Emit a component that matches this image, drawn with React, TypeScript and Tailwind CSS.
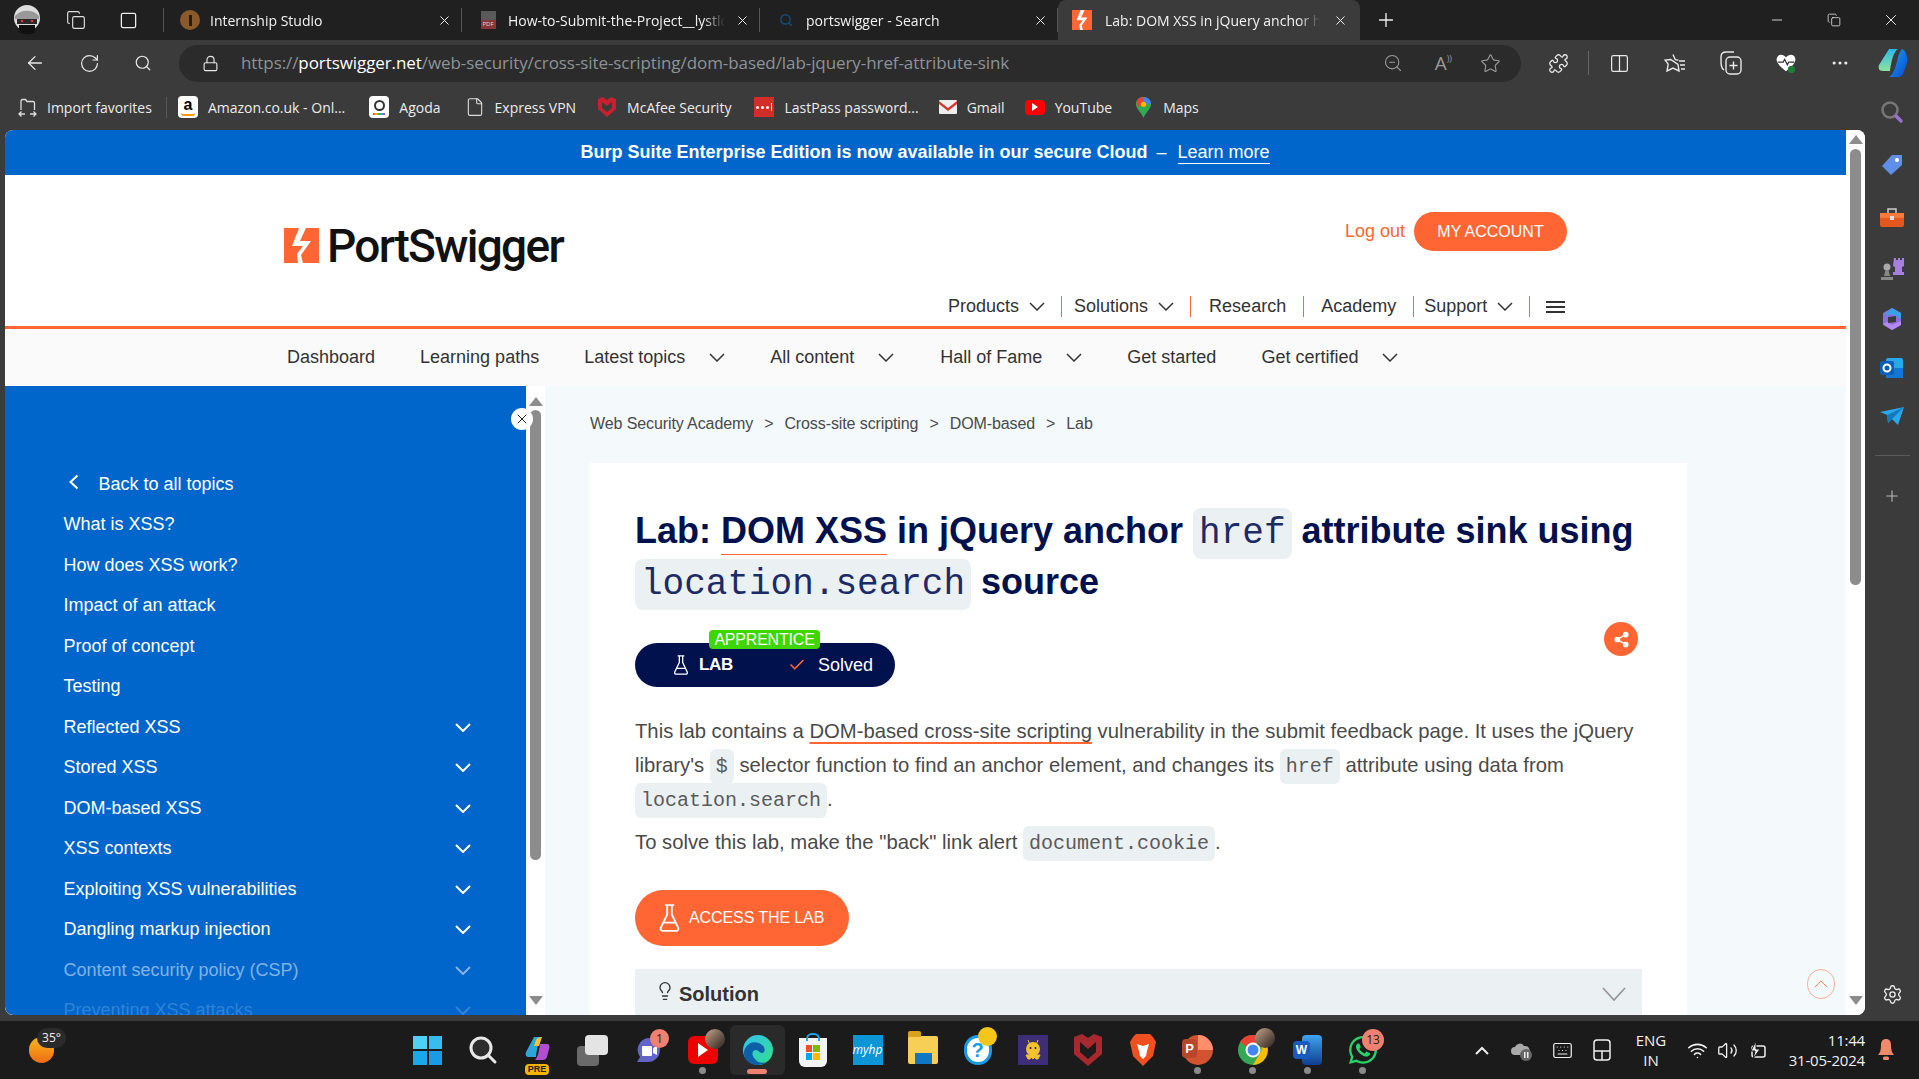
import { ArrowLeft, RotateCw, Search, Lock, ZoomOut, Star, Puzzle, Columns2, Ellipsis, X, Plus, Minus, Check, Share2, Lightbulb, Settings, Wifi, Volume2, Keyboard, Copy, Square, File } from 'lucide-react';
import { FaWhatsapp } from 'react-icons/fa';
import type { ReactNode } from 'react';

const sans = 'font-["Liberation_Sans",Arial,sans-serif]';
const ui = 'font-["Open_Sans",sans-serif]';

function Bolt({ size = 35 }: { size?: number }) {
  return (
    <svg width={size} height={size} viewBox="0 0 35 35">
      <rect width="35" height="35" fill="#ff6633" />
      <path d="M14 0h7l-6 13h11L16 27l2 8h-5l-1-9 6-8H7l7-18z" fill="#fff" transform="translate(1 0)" />
    </svg>
  );
}

// plain V chevron, lucide's is too narrow for this page
function Vee({ w = 16, h = 9, stroke = 1.5, className = '' }: { w?: number; h?: number; stroke?: number; className?: string }) {
  return (
    <svg width={w} height={h} viewBox={`0 0 ${w} ${h}`} className={className}>
      <path d={`M1 1L${w / 2} ${h - 1}L${w - 1} 1`} fill="none" stroke="currentColor" strokeWidth={stroke} />
    </svg>
  );
}

function Flask({ w, h, stroke = 1.6 }: { w: number; h: number; stroke?: number }) {
  return (
    <svg width={w} height={h} viewBox="0 0 18 24">
      <path d="M5 1h8M7 1v8L1.500 20.500C1 22 2 23 3 23h12c1 0 2-1 1.500-2.500L11 9V1M4 16h10" fill="none" stroke="currentColor" strokeWidth={stroke} strokeLinejoin="round" />
    </svg>
  );
}

function Tab({ icon, title, active }: { icon: ReactNode; title: string; active?: boolean }) {
  return (
    <div className={active ? 'w-[302px] h-full flex items-center pl-[14px] pr-[12px] gap-[13px] bg-[#3b3b3b] rounded-t-lg' : 'w-[298px] h-full flex items-center pl-[16px] pr-[9px] gap-[10px] border-r border-[#555]'}>
      <span className="w-[20px] h-[20px] flex items-center justify-center shrink-0">{icon}</span>
      <span className="flex-1 overflow-hidden whitespace-nowrap text-[14px] text-[#f2f2f2] [mask-image:linear-gradient(90deg,#000_90%,transparent)]">{title}</span>
      <X size={15} strokeWidth={1.6} className="text-[#eee] shrink-0" />
    </div>
  );
}

function Fav({ icon, label, className, gap = 'gap-[10px]' }: { icon: ReactNode; label: string; className: string; gap?: string }) {
  return (
    <div className={`flex items-center ${gap} ${className}`}>
      <span className="flex items-center justify-center">{icon}</span>
      <span className="text-[14px] text-[#ececec] whitespace-nowrap">{label}</span>
    </div>
  );
}

function Tri({ down }: { down?: boolean }) {
  return (
    <svg width="14" height="9" viewBox="0 0 14 9" className={down ? 'rotate-180' : ''}>
      <path d="M7 0l7 9H0z" fill="#8c8c8c" />
    </svg>
  );
}

function NavItem({ label, chevron, className }: { label: string; chevron?: boolean; className: string }) {
  return (
    <div className={`flex items-center h-[21px] text-[18px] text-[#333] border-[#ff6633] ${className}`}>
      <span>{label}</span>
      {chevron && <Vee className="ml-[10px]" />}
    </div>
  );
}

function SubItem({ label, chevron, className = '' }: { label: string; chevron?: boolean; className?: string }) {
  return (
    <div className={`flex items-center text-[18px] text-[#333] ${className}`}>
      <span>{label}</span>
      {chevron && <Vee className="ml-[24px]" />}
    </div>
  );
}

const sideRows = [
  { label: 'What is XSS?' },
  { label: 'How does XSS work?' },
  { label: 'Impact of an attack' },
  { label: 'Proof of concept' },
  { label: 'Testing' },
  { label: 'Reflected XSS', more: true },
  { label: 'Stored XSS', more: true },
  { label: 'DOM-based XSS', more: true },
  { label: 'XSS contexts', more: true },
  { label: 'Exploiting XSS vulnerabilities', more: true },
  { label: 'Dangling markup injection', more: true },
  { label: 'Content security policy (CSP)', more: true, tone: 'text-white/50' },
  { label: 'Preventing XSS attacks', more: true, tone: 'text-white/20' },
];

function Code({ children }: { children: ReactNode }) {
  return <code className='font-["Liberation_Mono",monospace] bg-[#ebf0f2] rounded-md px-[6px] py-[6px] text-[20px] leading-[20px] text-[#5a5a5a]'>{children}</code>;
}

function TitleCode({ children }: { children: ReactNode }) {
  return <code className='font-["Liberation_Mono",monospace] font-normal bg-[#ebf0f2] rounded-lg px-[6px] py-[5px] text-[36px] leading-[30px] text-[#1c2b66]'>{children}</code>;
}

function Task({ children, dot, active }: { children: ReactNode; dot?: boolean; active?: boolean }) {
  return (
    <div className={active ? 'relative w-[55px] h-[50px] flex items-center justify-center bg-[#2a2a2a] rounded-md' : 'relative w-[55px] h-[50px] flex items-center justify-center'}>
      {children}
      {dot && <span className="absolute bottom-[1px] left-[24px] w-[7px] h-[7px] rounded-full bg-[#8a8a8a]" />}
      {active && <span className="absolute bottom-[1px] left-[17px] w-[20px] h-[5px] rounded-full bg-[#f08070]" />}
    </div>
  );
}

function Badge({ n, className }: { n: string; className: string }) {
  return <span className={`absolute rounded-full bg-[#f08070] text-[#222] text-[12px] flex items-center justify-center ${className}`}>{n}</span>;
}

function Avatar({ className }: { className: string }) {
  return <span className={`absolute w-[20px] h-[20px] rounded-full bg-gradient-to-br from-[#c9a98a] to-[#2c2320] ${className}`} />;
}

export default function App() {
  return (
    <div className={`w-[1919px] h-[1079px] overflow-hidden flex flex-col bg-[#3b3b3b] ${ui}`}>
      {/* tab strip */}
      <div className="h-[40px] bg-[#202020] flex items-center shrink-0">
        <div className="w-[164px] h-[24px] flex items-center border-r border-[#555] shrink-0">
          <svg width="32" height="32" viewBox="0 0 32 32" className="ml-[11px]">
            <circle cx="16" cy="14" r="13" fill="#ddd" />
            <path d="M4 12c6-7 18-7 24 0v3H4z" fill="#999" />
            <rect x="6" y="15" width="20" height="5" fill="#2a2a2a" />
            <circle cx="11" cy="17" r="1.3" fill="#d33" />
            <circle cx="21" cy="17" r="1.3" fill="#d33" />
            <path d="M8 21h16v7c-4 3-12 3-16 0z" fill="#111" />
          </svg>
          <Copy size={20} strokeWidth={1.4} className="ml-[23px] text-[#ddd]" />
          <Square size={19} strokeWidth={1.6} className="ml-[33px] text-[#eee]" />
        </div>
        <div className="flex h-[40px] items-center">
          <div className="h-[24px] flex"><Tab title="Internship Studio" icon={<span className="w-[20px] h-[20px] rounded-full bg-[#8a5a2b] flex items-center justify-center"><span className="w-[3px] h-[11px] bg-[#2a1a0a]" /></span>} /></div>
          <div className="h-[24px] flex"><Tab title="How-to-Submit-the-Project__lystloc" icon={<span className="w-[15px] h-[18px] bg-[#5a5a5a] flex items-end"><span className="w-full h-[9px] bg-[#8b3535] text-[6px] leading-[9px] text-center text-[#ddd]">PDF</span></span>} /></div>
          <div className="h-[24px] flex"><Tab title="portswigger - Search" icon={<Search size={14} strokeWidth={2.5} className="text-[#174a78]" />} /></div>
          <Tab active title="Lab: DOM XSS in jQuery anchor href" icon={<span className="flex"><Bolt size={20} /></span>} />
        </div>
        <Plus size={22} strokeWidth={1.5} className="ml-[15px] text-[#eee]" />
        <div className="ml-auto flex items-center text-[#eee]">
          <Minus size={16} strokeWidth={1.3} />
          <Copy size={14} strokeWidth={1.3} className="ml-[42px]" />
          <X size={18} strokeWidth={1.3} className="ml-[41px] mr-[19px]" />
        </div>
      </div>

      {/* toolbar */}
      <div className="h-[46px] flex items-center shrink-0 text-[#e8e8e8] bg-[#3b3b3b]">
        <ArrowLeft size={22} strokeWidth={1.4} className="ml-[24px]" />
        <RotateCw size={21} strokeWidth={1.4} className="ml-[33px]" />
        <Search size={18} strokeWidth={1.6} className="ml-[34px]" />
        <div className="ml-[27px] w-[1342px] h-[37px] rounded-full bg-[#2b2b2b] flex items-center">
          <Lock size={17} strokeWidth={1.6} className="ml-[23px]" />
          <span className="ml-[22px] text-[17px] tracking-[-0.08px] text-[#8d9399] whitespace-nowrap">https://<span className="text-white">portswigger.net</span>/web-security/cross-site-scripting/dom-based/lab-jquery-href-attribute-sink</span>
          <div className="ml-auto flex items-center text-[#9a9a9a]">
            <ZoomOut size={20} strokeWidth={1.3} />
            <span className="ml-[32px] text-[19px] leading-none">A<span className="text-[9px] align-top">))</span></span>
            <Star size={21} strokeWidth={1.3} className="ml-[28px] mr-[20px]" />
          </div>
        </div>
        <Puzzle size={21} strokeWidth={1.5} className="ml-[27px]" />
        <span className="ml-[19px] w-px h-[24px] bg-[#666]" />
        <Columns2 size={21} strokeWidth={1.4} className="ml-[20px]" />
        <svg width="22" height="20" viewBox="0 0 22 20" className="ml-[34px]" fill="none" stroke="currentColor" strokeWidth="1.4">
          <path d="M9 1.500l2.300 5.200 3.200.4M14 11.500l1 6.500L9 15l-6 3 1.200-6.800L1 7l5.700-.5z" />
          <path d="M15 8h6M16 12h5M17 16h4" />
        </svg>
        <svg width="22" height="24" viewBox="0 0 22 24" className="ml-[34px]" fill="none" stroke="currentColor" strokeWidth="1.4">
          <path d="M4 19C1 17 1 14 1 6c0-3 2-5 5-5h8" />
          <rect x="6" y="6" width="15" height="17" rx="4" />
          <path d="M13.500 10.500v8M9.500 14.500h8" />
        </svg>
        <svg width="22" height="22" viewBox="0 0 24 24" className="ml-[33px]">
          <path d="M12 21C3 14 1 10 2 6.500 3.500 2 9 2 12 6c3-4 8.500-4 10 .5 1 3.500-1 7.500-10 14.500z" fill="#fff" />
          <path d="M3 11h6l1.500-3 3 6 1.500-3h6" fill="none" stroke="#333" strokeWidth="1.300" />
          <circle cx="18" cy="19" r="4" fill="#1e7d32" />
        </svg>
        <Ellipsis size={20} strokeWidth={1.8} className="ml-[33px]" />
        <svg width="32" height="32" viewBox="0 0 32 32" className="ml-[27px]">
          <defs>
            <linearGradient id="cpa" x1="0" y1="0" x2="0" y2="1"><stop offset="0" stopColor="#2ab7e8" /><stop offset="1" stopColor="#8fe3a0" /></linearGradient>
            <linearGradient id="cpb" x1="0" y1="0" x2="1" y2="1"><stop offset="0" stopColor="#19a3f5" /><stop offset="1" stopColor="#0a4bd0" /></linearGradient>
          </defs>
          <path d="M12 2h9c-4 2-7 12-8 22H6c-4 0-5-3-4-6z" fill="url(#cpa)" />
          <path d="M30 10c1 3 0 7-3 14-1 4-3 6-7 6h-8c4-2 7-10 9-20 1-3 2-6 4-8 3 1 4 4 5 8z" fill="url(#cpb)" />
        </svg>
      </div>

      <div className="flex flex-1 min-h-0">
        <div className="flex-1 min-w-0 flex flex-col">
          {/* favorites bar */}
          <div className="h-[44px] flex items-center shrink-0 pb-[2px]">
            <Fav className="ml-[18px] pr-[14px] border-r border-[#555]" icon={<svg width="19" height="19" viewBox="0 0 19 19" fill="none" stroke="#ddd" strokeWidth="1.300"><path d="M3 12V3c0-1 .5-1.500 1.500-1.500h3l1.500 2h6c1 0 1.500.5 1.500 1.500v7M1 16h6M3.500 13.500L1 16l2.500 2.500M18 16h-6M15.500 13.500L18 16l-2.500 2.500" /></svg>} label="Import favorites" />
            <Fav className="ml-[11px]" icon={<span className={`relative w-[20px] h-[22px] bg-white rounded-sm text-black text-[16px] leading-[18px] font-bold text-center ${sans}`}>a<span className="absolute left-[3px] bottom-[2px] w-[14px] h-[3px] border-b-2 border-[#f90] rounded-b-full" /></span>} label="Amazon.co.uk - Onl..." />
            <Fav className="ml-[24px]" icon={<span className="w-[20px] h-[22px] bg-white rounded-sm flex flex-col items-center justify-center gap-[2px]"><span className="w-[11px] h-[11px] rounded-full border-2 border-[#333]" /><span className="w-[12px] h-[2px] bg-[linear-gradient(90deg,#e33,#fb0,#3b5,#39e,#a4d)]" /></span>} label="Agoda" />
            <Fav className="ml-[24px]" icon={<File size={20} strokeWidth={1.3} className="text-[#ddd]" />} label="Express VPN" />
            <Fav className="ml-[22px]" gap="gap-[11px]" icon={<svg width="18" height="20" viewBox="0 0 18 20"><path d="M0 2l5-2 4 3 4-3 5 2v10l-9 8-9-8zM4 5v6l5 4 5-4V5l-5 4z" fill="#c8202f" fillRule="evenodd" /></svg>} label="McAfee Security" />
            <Fav className="ml-[23px]" icon={<span className="w-[20px] h-[20px] bg-[#d32d27] flex items-center justify-center gap-[2px]"><span className="w-[3px] h-[3px] rounded-full bg-white" /><span className="w-[3px] h-[3px] rounded-full bg-white" /><span className="w-[3px] h-[3px] rounded-full bg-white" /><span className="w-px h-[8px] bg-white" /></span>} label="LastPass password..." />
            <Fav className="ml-[20px]" icon={<svg width="18" height="14" viewBox="0 0 18 14"><rect width="18" height="14" rx="1" fill="#eee" /><path d="M0 1l9 7 9-7v3l-9 7-9-7z" fill="#d8382c" /></svg>} label="Gmail" />
            <Fav className="ml-[20px]" icon={<span className="w-[20px] h-[15px] rounded-[4px] bg-[#f00] flex items-center justify-center"><span className="w-0 h-0 border-y-[4px] border-y-transparent border-l-[6px] border-l-white" /></span>} label="YouTube" />
            <Fav className="ml-[24px]" gap="gap-[12px]" icon={<svg width="15" height="21" viewBox="0 0 15 21"><path d="M7.500 0C3 0 0 3.300 0 7.300 0 12 5 15 7.500 21 10 15 15 12 15 7.300 15 3.300 12 0 7.500 0z" fill="#34a853" /><path d="M1 3.500C2.500 1 5 0 7.500 0L7.500 7 2 10C.5 8 .3 5.500 1 3.500z" fill="#ea4335" /><path d="M7.500 0C11 0 15 3 15 7.300L7.500 7.300z" fill="#4285f4" /><circle cx="7.500" cy="7.300" r="2.600" fill="#fbbc04" /></svg>} label="Maps" />
          </div>

          {/* page */}
          <div className={`flex-1 min-h-0 ml-[5px] flex bg-white rounded-t-lg rounded-b-lg overflow-hidden ${sans}`}>
            <div className="flex-1 min-w-0 flex flex-col">
              <div className="h-[45px] shrink-0 bg-[#0066cc] flex items-center justify-center text-white text-[18px] pr-[1px]">
                <span className="font-bold">Burp Suite Enterprise Edition is now available in our secure Cloud</span>
                <span className="ml-[9px]">–</span>
                <span className="ml-[11px] border-b border-white leading-[22px]">Learn more</span>
              </div>

              <header className="h-[151px] shrink-0 flex flex-col pl-[279px]">
                <div className="flex">
                  <div className="flex items-center mt-[53px] h-[35px]">
                    <Bolt />
                    <span className='ml-[8px] font-["Roboto",sans-serif] font-medium text-[46px] tracking-[-1.7px] text-[#111] leading-none'>PortSwigger</span>
                  </div>
                </div>
                <div className="flex justify-end mt-[-51px] pr-[279px] h-[39px] items-center">
                  <span className="text-[18px] text-[#ff6633]">Log out</span>
                  <span className="ml-[9px] w-[153px] h-[39px] rounded-full bg-[#ff6633] text-white text-[16px] flex items-center justify-center">MY ACCOUNT</span>
                </div>
                <div className="flex mt-[45px] ml-[664px]">
                  <NavItem label="Products" chevron className="pr-[16px] border-r" />
                  <NavItem label="Solutions" chevron className="pl-[12px] pr-[16px] border-r" />
                  <NavItem label="Research" className="pl-[18px] pr-[17px] border-r" />
                  <NavItem label="Academy" className="pl-[17px] pr-[17px] border-r" />
                  <NavItem label="Support" chevron className="pl-[10px] pr-[16px] border-r" />
                  <div className="ml-[16px] w-[19px] h-[21px] flex flex-col justify-center gap-[3px]">
                    <span className="h-[2px] bg-[#333]" /><span className="h-[2px] bg-[#333]" /><span className="h-[2px] bg-[#333]" />
                  </div>
                </div>
              </header>

              <div className="h-[3px] shrink-0 bg-[#ff6633]" />

              <nav className="h-[57px] shrink-0 bg-[#fafafa] flex items-center pl-[282px]">
                <SubItem label="Dashboard" />
                <SubItem label="Learning paths" className="ml-[45px]" />
                <SubItem label="Latest topics" chevron className="ml-[45px]" />
                <SubItem label="All content" chevron className="ml-[45px]" />
                <SubItem label="Hall of Fame" chevron className="ml-[46px]" />
                <SubItem label="Get started" className="ml-[45px]" />
                <SubItem label="Get certified" chevron className="ml-[45px]" />
              </nav>

              <div className="flex-1 min-h-0 flex">
                {/* left topic menu */}
                <aside className="relative w-[521px] shrink-0 bg-[#0066cc] text-white text-[18px] rounded-bl-lg overflow-hidden pl-[58.500px] pr-[55px] pt-[78px]">
                  <div className="h-[40.500px] flex items-center">
                    <svg width="11" height="16" viewBox="0 0 11 16" className="ml-[4px] -mt-[5px]"><path d="M9.500 1.500L2.500 8l7 6.500" fill="none" stroke="#fff" strokeWidth="2" /></svg>
                    <span className="ml-[20px]">Back to all topics</span>
                  </div>
                  {sideRows.map(row => (
                    <div key={row.label} className={`h-[40.500px] flex items-center justify-between ${row.tone || ''}`}>
                      <span>{row.label}</span>
                      {row.more && <Vee stroke={2} />}
                    </div>
                  ))}
                </aside>
                <div className="relative w-[19px] shrink-0 bg-white flex flex-col items-center">
                  <span className="mt-[11px] flex"><Tri /></span>
                  <span className="mt-[4px] w-[11px] h-[450px] rounded-full bg-[#8c8c8c]" />
                  <span className="mt-auto mb-[10px] flex"><Tri down /></span>
                  <span className="absolute left-[-15px] top-[22px] w-[22px] h-[22px] rounded-full bg-white flex items-center justify-center"><X size={16} strokeWidth={1.5} className="text-[#222]" /></span>
                </div>

                {/* content */}
                <main className="relative flex-1 min-w-0 bg-[#f4f9fb] pl-[45px] pr-[159px]">
                  <div className="h-[77px] flex items-center pb-[1px] text-[16px] text-[#4a4a4a] tracking-[-0.1px]">
                    <span>Web Security Academy</span>
                    <span className="mx-[11px]">&gt;</span>
                    <span>Cross-site scripting</span>
                    <span className="mx-[11px]">&gt;</span>
                    <span>DOM-based</span>
                    <span className="mx-[11px]">&gt;</span>
                    <span>Lab</span>
                  </div>
                  <div className="bg-white h-[552px] px-[45px] pt-[42px] overflow-hidden">
                    <h1 className="text-[36px] leading-[51px] font-bold text-[#00114d]">
                      Lab: <span className="border-b border-[#ff6633] pb-[3px]">DOM XSS</span> in jQuery anchor <TitleCode>href</TitleCode> attribute sink using <TitleCode>location.search</TitleCode> source
                    </h1>
                    <div className="flex justify-between mt-[36px]">
                      <div className="relative w-[260px] h-[44px] rounded-full bg-[#00114d] text-white flex items-center">
                        <span className="absolute left-[74px] top-[-13px] w-[111px] h-[19px] rounded-[4px] bg-[#3dd600] text-[16px] leading-[19px] text-center tracking-[-0.2px]">APPRENTICE</span>
                        <span className="ml-[38px] flex"><Flask w={16} h={20} /></span>
                        <span className="ml-[10px] text-[17px] font-bold tracking-[-0.3px]">LAB</span>
                        <Check size={18} strokeWidth={2.2} className="ml-[55px] text-[#ff6633]" />
                        <span className="ml-[12px] text-[18px]">Solved</span>
                      </div>
                      <span className="-mt-[21px] mr-[4px] w-[34px] h-[34px] rounded-full bg-[#ff6633] flex items-center justify-center"><Share2 size={17} strokeWidth={2} fill="#fff" className="text-white" /></span>
                    </div>
                    <div className="mt-[27px] text-[20.250px] leading-[34px] text-[#4a4a4a]">
                      <p>
                        This lab contains a <span className="underline decoration-[#ff6633] decoration-2 underline-offset-4">DOM-based cross-site scripting</span> vulnerability in the submit feedback page. It uses the jQuery library's <Code>$</Code> selector function to find an anchor element, and changes its <Code>href</Code> attribute using data from <Code>location.search</Code>.
                      </p>
                      <p className="mt-[9px]">To solve this lab, make the "back" link alert <Code>document.cookie</Code>.</p>
                    </div>
                    <div className="mt-[31px] w-[214px] h-[56px] rounded-full bg-[#ff6633] text-white flex items-center pl-[24px]">
                      <Flask w={21} h={28} />
                      <span className="ml-[9px] text-[16px] tracking-[-0.1px]">ACCESS THE LAB</span>
                    </div>
                    <div className="mt-[23px] h-[46px] bg-[#ebf0f2] flex items-center pt-[3px] pl-[20px] pr-[16px] text-[#333]">
                      <Lightbulb size={20} strokeWidth={1.6} className="-mt-[5px]" />
                      <span className="ml-[4px] text-[20px] font-bold">Solution</span>
                      <Vee w={24} h={14} stroke={1.8} className="ml-auto text-[#999]" />
                    </div>
                  </div>
                  <span className="absolute right-[11px] bottom-[16px] w-[28px] h-[30px] rounded-full border-[1.5px] border-[#ff6633]/50 flex items-center justify-center"><Vee w={14} h={8} stroke={1} className="rotate-180 text-[#ff6633]/80" /></span>
                </main>
              </div>
            </div>
            {/* page scrollbar */}
            <div className="w-[19px] shrink-0 bg-white flex flex-col items-center">
              <span className="mt-[5px] flex"><Tri /></span>
              <span className="mt-[5px] w-[11px] h-[436px] rounded-full bg-[#8c8c8c]" />
              <span className="mt-auto mb-[10px] flex"><Tri down /></span>
            </div>
          </div>
        </div>

        {/* edge sidebar */}
        <div className="w-[54px] shrink-0 flex flex-col items-center pt-[14px] pb-[10px]">
          <svg width="24" height="24" viewBox="0 0 24 24"><circle cx="10" cy="10" r="7.500" fill="none" stroke="#777" strokeWidth="2.500" /><path d="M16 16l5 5" stroke="#9a6fd0" strokeWidth="3.500" strokeLinecap="round" /></svg>
          <svg width="22" height="22" viewBox="0 0 22 22" className="mt-[30px]"><path d="M11 1h10v10L10 21 1 12z" fill="#5f8fe8" /><circle cx="16" cy="6" r="2" fill="#fff" /></svg>
          <svg width="24" height="20" viewBox="0 0 24 20" className="mt-[32px]"><path d="M8 5V1h8v4" fill="none" stroke="#ccc" strokeWidth="1.500" /><rect y="5" width="24" height="14" rx="2" fill="#e2571e" /><rect y="5" width="24" height="5" fill="#f47b3b" /><rect x="10" y="8" width="4" height="4" fill="#ddd" /></svg>
          <svg width="24" height="24" viewBox="0 0 24 24" className="mt-[29px]"><path d="M14 1h2v2h2V1h2v2h2V1h2v8l-2 1v5h2v3H13v-3h2v-5l-2-1z" fill="#a87fe0" /><circle cx="7" cy="10" r="3.500" fill="#aaa" /><path d="M5.500 13h3l1.500 6H4zM1 20h12v3H1z" fill="#888" /></svg>
          <svg width="22" height="24" viewBox="0 0 22 24" className="mt-[26px]"><path d="M11 1l9 5v12l-9 5-9-5V6z" fill="#8a6fe0" /><path d="M11 1l9 5v6l-5-3-4-2-6 2V6z" fill="#3aa0e8" /><path d="M2 17l4-2 5 3 9-4v4l-9 5z" fill="#b48af0" /><path d="M7 10l8-1v6l-8 1z" fill="#3b3b3b" /></svg>
          <svg width="24" height="22" viewBox="0 0 24 22" className="mt-[26px]"><rect x="6" y="1" width="17" height="20" rx="2" fill="#28a8ea" /><rect x="6" y="11" width="17" height="10" fill="#0f78d4" /><rect y="4" width="14" height="14" rx="2" fill="#0a5fb4" /><circle cx="7" cy="11" r="3.500" fill="none" stroke="#fff" strokeWidth="2" /></svg>
          <svg width="24" height="18" viewBox="0 0 24 18" className="mt-[28px]"><path d="M0 5l24-5-6 18-6-6-4 4-1-8z" fill="#29a9ea" /><path d="M7 8L24 0 12 12l-4 4z" fill="#1279bd" /></svg>
          <span className="mt-[30px] w-[35px] h-px bg-[#5a5a5a]" />
          <Plus size={18} strokeWidth={1.4} className="mt-[31px] text-[#bbb]" />
          <Settings size={21} strokeWidth={1.5} className="mt-auto text-[#eee]" />
        </div>
      </div>

      <div className="h-[6px] shrink-0 bg-[#3b3b3b]" />

      {/* taskbar */}
      <div className={`h-[58px] shrink-0 bg-[#1b1b1b] flex items-center text-[#f0f0f0] ${ui}`}>
        <div className="relative w-[400px] h-full shrink-0">
          <span className="absolute left-[29px] top-[16px] w-[25px] h-[26px] rounded-full bg-gradient-to-b from-[#f5b81c] to-[#ee6a17]" />
          <span className="absolute left-[37px] top-[7px] w-[29px] h-[20px] rounded-full bg-[#2b2b2b] text-[12px] leading-[20px] text-center">35°</span>
        </div>
        <Task>
          <span className="grid grid-cols-2 gap-[2px] w-[29px] h-[29px]">
            <span className="bg-[#4fd0f5]" /><span className="bg-[#35bdf0]" /><span className="bg-[#1ba7ea]" /><span className="bg-[#1a9be6]" />
          </span>
        </Task>
        <Task><svg width="30" height="30" viewBox="0 0 30 30"><circle cx="13" cy="13" r="10" fill="#2d2d2d" stroke="#e8e8e8" strokeWidth="3" /><path d="M20 20l7 7" stroke="#e8e8e8" strokeWidth="3" strokeLinecap="round" /></svg></Task>
        <Task>
          <svg width="30" height="30" viewBox="0 0 30 30"><path d="M11 2h8c-3 3-5 9-6 20H6c-3 0-4-2-3-5z" fill="#2aa7d8" /><path d="M17 9h7c2 0 3 2 2 5l-2 8c-1 2-2 3-4 3h-8c3-3 4-9 5-16z" fill="#b04fd0" /><path d="M13 5c1-2 3-3 6-3l-3 9h-5z" fill="#f2c230" /></svg>
          <span className={`absolute left-[15px] bottom-[0px] w-[24px] h-[11px] bg-[#f5b400] rounded-sm text-[9px] leading-[11px] text-center font-bold text-[#222] ${sans}`}>PRE</span>
        </Task>
        <Task>
          <span className="relative w-[31px] h-[31px]">
            <span className="absolute left-0 bottom-0 w-[22px] h-[20px] rounded-sm bg-[#6a6a6a]" />
            <span className="absolute right-0 top-0 w-[23px] h-[20px] rounded-sm bg-[#e4e4e4]" />
          </span>
        </Task>
        <Task>
          <svg width="30" height="30" viewBox="0 0 30 30"><path d="M15 3a12 12 0 0 1 0 24H4l3-5a12 12 0 0 1 8-19z" fill="#6264c9" /><rect x="9" y="11" width="10" height="10" rx="1" fill="#fff" /><path d="M20 13l4-2v9l-4-2z" fill="#fff" /></svg>
          <Badge n="1" className="left-[30px] top-[4px] w-[19px] h-[19px]" />
        </Task>
        <Task dot>
          <span className="w-[30px] h-[28px] rounded-md bg-[#ee0000] flex items-center justify-center"><span className="w-0 h-0 border-y-[7px] border-y-transparent border-l-[10px] border-l-white" /></span>
          <Avatar className="left-[30px] top-[4px]" />
        </Task>
        <Task active>
          <svg width="32" height="32" viewBox="0 0 32 32"><defs><linearGradient id="edg" x1="0" y1="0" x2="1" y2="1"><stop offset="0" stopColor="#35c1f1" /><stop offset="1" stopColor="#2fe08a" /></linearGradient></defs><circle cx="16" cy="16" r="15" fill="url(#edg)" /><path d="M2 18C4 8 14 6 20 11c4 3 3 8 0 8-3 0-3-3-6-3-4 0-5 5-1 9 2 3 6 5 12 3-7 6-24 3-23-10z" fill="#0d5fa8" /></svg>
        </Task>
        <Task>
          <span className="relative w-[28px] h-[29px] mt-[4px] bg-[#f4f4f4] rounded-b-md grid grid-cols-2 gap-[1px] p-[7px]">
            <span className="bg-[#f25022]" /><span className="bg-[#7fba00]" /><span className="bg-[#00a4ef]" /><span className="bg-[#ffb900]" />
            <span className="absolute left-[7px] -top-[5px] w-[14px] h-[8px] border-2 border-b-0 border-[#1ba7ea] rounded-t-md" />
          </span>
        </Task>
        <Task><span className="w-[30px] h-[30px] bg-[#0d96d6] text-white text-[12px] italic text-center leading-[30px]">myhp</span></Task>
        <Task>
          <span className="relative w-[30px] h-[28px] rounded-[2px] bg-[#f8cf55]">
            <span className="absolute left-0 -top-[5px] w-[13px] h-[6px] bg-[#d9a21b] rounded-t-[2px]" />
            <span className="absolute left-[7px] bottom-0 w-[17px] h-[11px] bg-[#0f78c4]" />
          </span>
        </Task>
        <Task>
          <span className={`w-[28px] h-[30px] rounded-full bg-white border-[3px] border-[#1a9be6] text-[#1a9be6] text-[20px] font-bold text-center leading-[24px] ${sans}`}>?</span>
          <span className="absolute left-[28px] top-[2px] w-[19px] h-[19px] rounded-full bg-[#f5c518]" />
        </Task>
        <Task>
          <svg width="30" height="30" viewBox="0 0 30 30"><rect width="30" height="30" fill="#3d2e78" /><circle cx="15" cy="14" r="7" fill="#f2c230" /><path d="M10 5l2 5M20 5l-2 5M8 20h14l-2 4h-2l-1-2-2 2-2-2-1 2h-2z" fill="#f2c230" stroke="#f2c230" /><circle cx="12.500" cy="13" r="1" fill="#222" /><circle cx="17.500" cy="13" r="1" fill="#222" /></svg>
        </Task>
        <Task><svg width="28" height="32" viewBox="0 0 28 32"><path d="M0 3l8-3 6 4 6-4 8 3v17L14 32 0 20zM6 8v10l8 7 8-7V8l-8 7z" fill="#a8292d" fillRule="evenodd" /></svg></Task>
        <Task><svg width="26" height="32" viewBox="0 0 26 32"><path d="M6 0h14l3 3 3 5-3 14-10 10L3 22 0 8l3-5z" fill="#f0501e" /><path d="M7 10l6 2 6-2-2 7-1 5-3 3-3-3-1-5z" fill="#fff" /></svg></Task>
        <Task dot>
          <svg width="30" height="32" viewBox="0 0 30 32"><circle cx="15" cy="16" r="15" fill="#d35230" /><path d="M15 1a15 15 0 0 1 15 15H15z" fill="#ff8f6b" /></svg>
          <span className={`absolute left-[12px] top-[14px] w-[15px] h-[19px] bg-[#b7472a] rounded-sm text-white text-[13px] font-bold leading-[19px] text-center ${sans}`}>P</span>
        </Task>
        <Task dot>
          <svg width="30" height="30" viewBox="0 0 30 30"><circle cx="15" cy="15" r="15" fill="#34a853" /><path d="M2 7a15 15 0 0 1 26 1H15a7 7 0 0 0-6 4z" fill="#ea4335" /><path d="M28 8a15 15 0 0 1-13 22l7-12a7 7 0 0 0-1-10z" fill="#fbbc04" /><circle cx="15" cy="15" r="6.500" fill="#4285f4" stroke="#fff" strokeWidth="2" /></svg>
          <Avatar className="left-[30px] top-[3px]" />
        </Task>
        <Task dot>
          <span className="relative w-[29px] h-[30px]">
            <span className="absolute right-0 top-0 w-[20px] h-[30px] rounded-sm bg-gradient-to-b from-[#41a5ee] to-[#103f91]" />
            <span className={`absolute left-0 top-[6px] w-[17px] h-[18px] rounded-sm bg-[#185abd] text-white text-[12px] font-bold leading-[18px] text-center ${sans}`}>W</span>
          </span>
        </Task>
        <Task dot>
          <FaWhatsapp size={32} className="text-[#25d366]" />
          <Badge n="13" className="left-[27px] top-[4px] w-[22px] h-[22px]" />
        </Task>

        <svg width="14" height="9" viewBox="0 0 14 9" className="ml-[85px]"><path d="M1 8l6-6 6 6" fill="none" stroke="#eee" strokeWidth="2" /></svg>
        <svg width="22" height="22" viewBox="0 0 22 22" className="ml-[22px]"><path d="M4 16a4 4 0 0 1 0-8 5 5 0 0 1 9-1 4 4 0 0 1 2 9z" fill="#aaa" /><circle cx="15" cy="16" r="6" fill="#666" /><rect x="13" y="13" width="1.500" height="6" fill="#eee" /><rect x="16" y="13" width="1.500" height="6" fill="#eee" /></svg>
        <Keyboard size={21} strokeWidth={1.4} className="ml-[19px]" />
        <svg width="18" height="22" viewBox="0 0 18 22" className="ml-[20px]"><rect x="1" y="1" width="16" height="20" rx="3" fill="none" stroke="#eee" strokeWidth="1.500" /><path d="M1 12h16M9 12v9" stroke="#eee" strokeWidth="1.500" /></svg>
        <div className="ml-[20px] w-[40px] text-[15px] leading-[20px] text-center">ENG<br />IN</div>
        <Wifi size={21} strokeWidth={1.8} className="ml-[16px]" />
        <Volume2 size={21} strokeWidth={1.5} className="ml-[9px]" />
        <svg width="21" height="21" viewBox="0 0 21 21" className="ml-[9px]"><rect x="5" y="6" width="13" height="11" rx="2" fill="none" stroke="#eee" strokeWidth="1.500" /><path d="M9 1L4 11h4l-2 8 7-10H9z" fill="#eee" stroke="#1b1b1b" /></svg>
        <div className="ml-[19px] w-[78px] text-[15px] tracking-[-0.2px] leading-[20px] text-right whitespace-nowrap">11:44<br />31-05-2024</div>
        <svg width="18" height="24" viewBox="0 0 18 24" className="ml-[12px]"><path d="M9 1c-3 0-5 2-5 6 0 5-1 8-3 10h16c-2-2-3-5-3-10 0-4-2-6-5-6z" fill="#f08a6b" /><rect x="6" y="18.500" width="6" height="3.500" rx="1.500" fill="#f08a6b" /></svg>
      </div>
    </div>
  );
}
